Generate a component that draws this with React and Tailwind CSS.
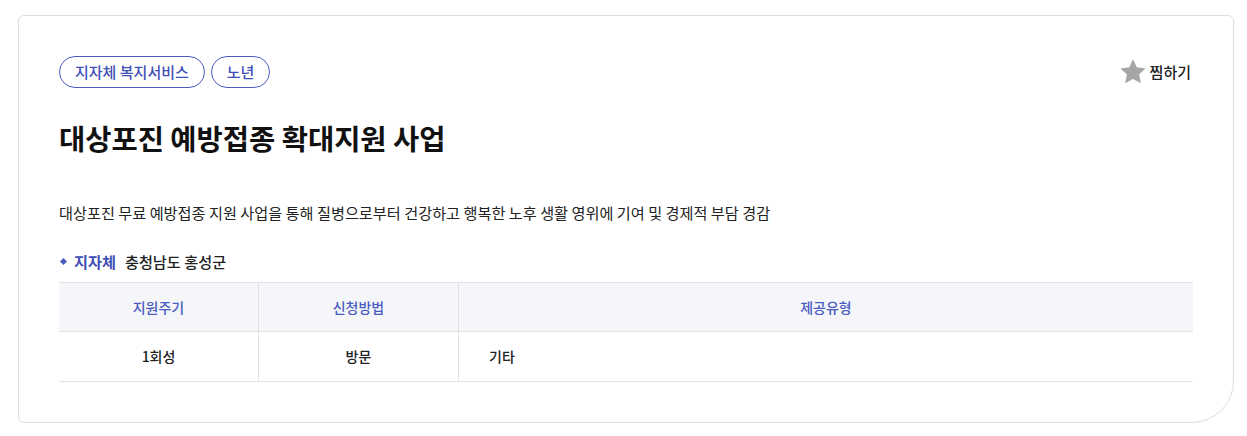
import React from "react";

const font = { fontFamily: '"Noto Sans CJK KR", "Noto Sans", sans-serif' };

function StarIcon() {
  return (
    <svg width="28" height="28" viewBox="0 0 24 24" className="shrink-0">
      <path
        d="M12 2.2l2.95 6.3 6.85.8-5.1 4.7 1.4 6.8L12 17.4l-6.1 3.4 1.4-6.8-5.1-4.7 6.85-.8z"
        fill="#a6a6a6"
        stroke="#a6a6a6"
        strokeWidth="1"
        strokeLinejoin="round"
      />
    </svg>
  );
}

function Tag({ children }) {
  return (
    <span className="inline-flex h-[32px] items-center rounded-full border border-[#4a5cc0] px-[15px] text-[15px] font-medium text-[#3f4fb5]">
      {children}
    </span>
  );
}

export default function App() {
  return (
    <div className="min-h-[436px] bg-white pl-[18px] pr-[13px] pt-[15px]" style={font}>
      <div className="rounded-[6px] rounded-br-[42px] border border-[#dddddd] bg-white px-[40px] pb-[40px] pt-[40px]">
        <div className="flex items-center justify-between">
          <div className="flex gap-[6px]">
            <Tag>지자체 복지서비스</Tag>
            <Tag>노년</Tag>
          </div>
          <button className="mr-[2px] flex items-center gap-[3px] text-[15px] font-medium text-[#222]">
            <StarIcon />
            찜하기
          </button>
        </div>

        <h1 className="mt-[28px] text-[28.5px] font-bold leading-[44px] text-[#111]">
          대상포진 예방접종 확대지원 사업
        </h1>

        <p className="mt-[42px] text-[15.2px] leading-[20px] text-[#222]">
          대상포진 무료 예방접종 지원 사업을 통해 질병으로부터 건강하고 행복한 노후 생활 영위에 기여 및 경제적 부담 경감
        </p>

        <div className="mt-[29px] flex items-center text-[15.2px] leading-[20px]">
          <span className="ml-[2px] mr-[8px] h-[5px] w-[5px] rotate-45 bg-[#4a5cc0]" />
          <span className="font-bold text-[#3f4fb5]">지자체</span>
          <span className="ml-[9px] font-medium text-[#222]">충청남도 홍성군</span>
        </div>

        <div className="mt-[11px] border-t border-[#e2e2e2] text-[14px]">
          <div className="grid grid-cols-[200px_200px_1fr] border-b border-[#e2e2e2] bg-[#f5f6fa] font-medium text-[#4a5cc0]">
            <div className="flex h-[48px] items-center justify-center border-r border-[#e2e2e2]">지원주기</div>
            <div className="flex h-[48px] items-center justify-center border-r border-[#e2e2e2]">신청방법</div>
            <div className="flex h-[48px] items-center justify-center">제공유형</div>
          </div>
          <div className="grid grid-cols-[200px_200px_1fr] border-b border-[#e2e2e2] font-medium text-[#222]">
            <div className="flex h-[49px] items-center justify-center border-r border-[#e2e2e2]">1회성</div>
            <div className="flex h-[49px] items-center justify-center border-r border-[#e2e2e2]">방문</div>
            <div className="flex h-[49px] items-center pl-[30px]">기타</div>
          </div>
        </div>
      </div>
    </div>
  );
}
